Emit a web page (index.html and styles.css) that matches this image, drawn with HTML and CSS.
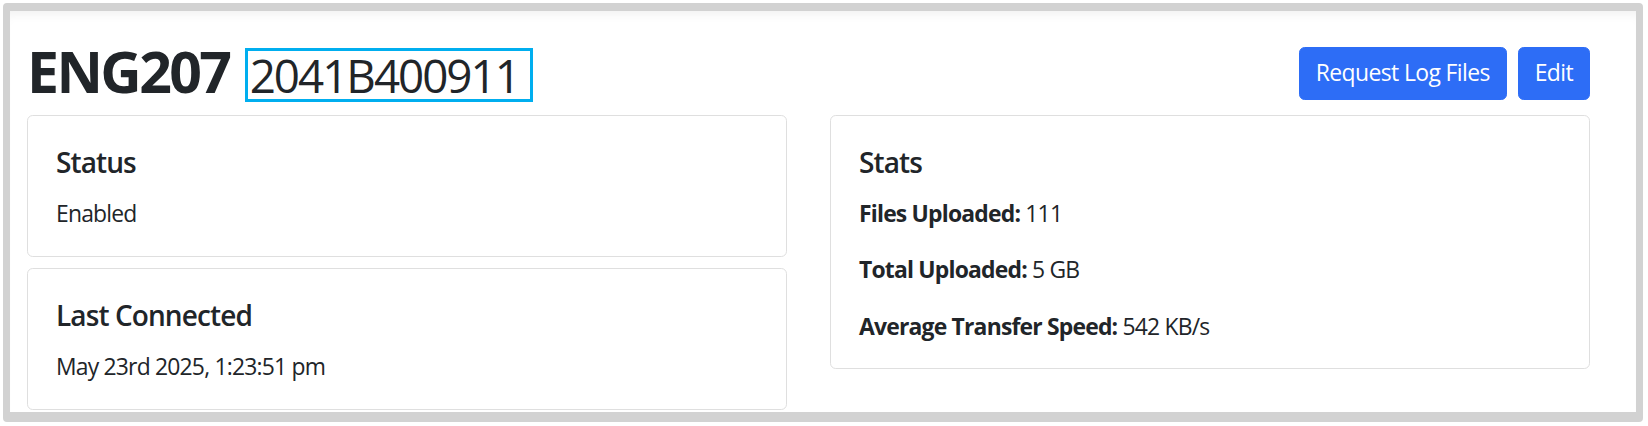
FILE: index.html
```html
<!DOCTYPE html>
<html lang="en">
<head>
<meta charset="utf-8">
<title>ENG207</title>
<link rel="stylesheet" href="styles.css">
</head>
<body>
<div class="frame">
  <div class="page">
    <div class="header">
      <h1 class="title">ENG207 <small class="serial">2041B400911</small></h1>
      <div class="actions">
        <button class="btn" type="button">Request Log Files</button>
        <button class="btn" type="button">Edit</button>
      </div>
    </div>
    <div class="grid">
      <div class="col">
        <div class="card">
          <h5 class="card-title">Status</h5>
          <p class="card-text">Enabled</p>
        </div>
        <div class="card">
          <h5 class="card-title">Last Connected</h5>
          <p class="card-text">May 23rd 2025, 1:23:51 pm</p>
        </div>
      </div>
      <div class="col">
        <div class="card">
          <h5 class="card-title">Stats</h5>
          <p class="stat"><strong>Files Uploaded:</strong> 111</p>
          <p class="stat"><strong>Total Uploaded:</strong> 5 GB</p>
          <p class="stat"><strong>Average Transfer Speed:</strong> 542 KB/s</p>
        </div>
      </div>
    </div>
  </div>
</div>
</body>
</html>
```
FILE: styles.css
```css
* { box-sizing: border-box; }

html, body {
  margin: 0;
  height: 100%;
  background: #ffffff;
}

body {
  font-family: "Open Sans", "Noto Sans", "Liberation Sans", sans-serif;
  font-size: 22.9px;
  line-height: 1.5;
  color: #212529;
}

.frame {
  margin: 3px 5px 4px 3px;
  height: calc(100% - 7px);
  border-style: solid;
  border-color: #d2d2d2;
  border-width: 8px 7px 10px 7px;
  border-radius: 4px;
  overflow: hidden;
  background: #ffffff;
}

.page {
  height: 100%;
  padding: 26px 46px 0 17px;
  box-shadow: inset 0 10px 12px -8px rgba(0, 0, 0, 0.07);
}

.header {
  display: flex;
  justify-content: space-between;
  align-items: center;
  margin-bottom: 9px;
}

.title {
  margin: 0;
  font-size: 57.2px;
  font-weight: 700;
  line-height: 1.2;
  letter-spacing: -2.6px;
}

.serial {
  display: inline-block;
  font-size: 80%;
  font-weight: 400;
  line-height: 1.05;
  letter-spacing: -2px;
  border: 3px solid #00aeef;
  padding: 0 11px 0 2px;
  margin-left: 3px;
}

.actions {
  display: flex;
  gap: 11px;
  margin-top: 4px;
}

.btn {
  font-family: inherit;
  font-size: 22.9px;
  line-height: 1.5;
  color: #ffffff;
  background: #2d6df6;
  border: 1px solid #2d6df6;
  border-radius: 5.7px;
  padding: 8.6px 16px;
  letter-spacing: -0.6px;
}

.grid {
  display: grid;
  grid-template-columns: 1fr 1fr;
  column-gap: 43px;
  align-items: start;
}

.col {
  display: flex;
  flex-direction: column;
  gap: 11px;
}

.card {
  border: 1px solid #dfdfdf;
  border-radius: 5.7px;
  padding: 30px 28px 24px;
  background: #ffffff;
}

.card-title {
  margin: 0 0 18px;
  font-size: 28px;
  font-weight: 600;
  line-height: 1.2;
  letter-spacing: -0.9px;
}

.card-text {
  margin: 0;
  letter-spacing: -0.8px;
}

.stat {
  margin: 0 0 21.9px;
  letter-spacing: -0.8px;
}

.stat:last-child {
  margin-bottom: 0;
}

.stat strong {
  font-weight: 700;
}
```
